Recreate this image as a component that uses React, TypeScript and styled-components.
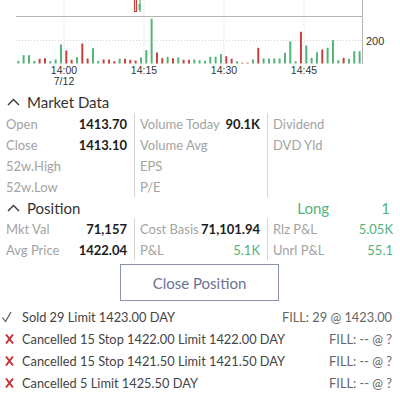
import React from 'react';
import styled, { createGlobalStyle } from 'styled-components';

const GlobalStyle = createGlobalStyle`
  html, body {
    margin: 0;
    padding: 0;
    background: #fff;
  }
  body {
    font-family: 'Lato', 'Noto Sans', sans-serif;
  }
`;

const GREEN = '#55b27a';
const RED = '#c8413f';

// volume per minute bar: [height, up?]
const volumes: [number, boolean][] = [
  [2.7, true], [8.3, true], [8.3, true], [2.7, true], [4.7, false], [5.3, false], [2.3, true], [4, true],
  [19, true], [13, false], [3.7, false], [6.3, true], [20, false], [5, false], [15.3, true], [2.7, true],
  [4, false], [4, false], [2.3, false], [4.7, true], [4.7, false], [3.7, false], [3, false], [6, true],
  [13.3, true], [44.7, true], [11, false], [5.3, false], [6.7, true], [5.3, false], [6, true], [3.7, false],
  [3.7, false], [4, true], [3.3, true], [2.7, true], [6.7, true], [6.7, true], [9.3, true], [7.3, false],
  [4.7, false], [2.3, true], [0.8, false], [0.8, false], [4, true], [15.7, false], [5, true], [5, true],
  [5, true], [5, true], [10.7, true], [22, true], [2.3, true], [31.7, false], [18, true], [5.7, true],
  [11.3, true], [14, false], [15.7, true], [23.3, true], [3.3, true], [5.7, false], [4.7, true], [12.3, true],
  [12.3, true],
];

const timeTicks = [
  { x: 64, label: '14:00', sub: '7/12' },
  { x: 144, label: '14:15' },
  { x: 224, label: '14:30' },
  { x: 304, label: '14:45' },
];

const VolumeChart: React.FC = () => {
  const base = 63.5;
  return (
    <ChartSvg width={400} height={90} viewBox="0 0 400 90">
      {timeTicks.map((t) => (
        <line key={t.x} x1={t.x} y1={0} x2={t.x} y2={64} stroke="#d2d2d2" strokeWidth={1} strokeDasharray="1 2" />
      ))}
      <line x1={16} y1={40.5} x2={362} y2={40.5} stroke="#d2d2d2" strokeWidth={1} strokeDasharray="1 2" />
      <line x1={16} y1={16.5} x2={362} y2={16.5} stroke="#b4b4b4" strokeWidth={1} />
      <line x1={362.5} y1={0} x2={362.5} y2={64} stroke="#b4b4b4" strokeWidth={1} />

      <path d="M136.5 0 V11.5 H134.5 V0" fill="none" stroke={RED} strokeWidth={1.2} />
      <line x1={140} y1={0} x2={140} y2={12} stroke={GREEN} strokeWidth={1.2} />
      <line x1={139.5} y1={4} x2={139.5} y2={10} stroke={GREEN} strokeWidth={2} />

      {volumes.map(([h, up], i) => (
        <rect key={i} x={17.3 + i * 5.333} y={base - h} width={2} height={h} fill={up ? GREEN : RED} />
      ))}

      <text x={366} y={44.5} fontSize={11} fill="#333" fontFamily="'Liberation Sans', Arial, sans-serif">200</text>
      {timeTicks.map((t) => (
        <g key={`l${t.x}`} fontSize={10.5} fill="#333" fontFamily="'Liberation Sans', Arial, sans-serif" textAnchor="middle">
          <text x={t.x} y={74}>{t.label}</text>
          {t.sub && <text x={t.x} y={84.5}>{t.sub}</text>}
        </g>
      ))}
    </ChartSvg>
  );
};

const Chevron: React.FC = () => (
  <svg width={13} height={8} viewBox="0 0 13 8">
    <polyline points="1,7 6.5,1.5 12,7" fill="none" stroke="#333" strokeWidth={1.4} />
  </svg>
);

const CheckIcon: React.FC = () => (
  <svg width={14} height={12} viewBox="0 0 14 12">
    <polyline points="1.5,6.5 4.5,10.5 10,1" fill="none" stroke="#555" strokeWidth={1.2} />
  </svg>
);

const CrossIcon: React.FC = () => (
  <svg width={14} height={12} viewBox="0 0 14 12">
    <path d="M5 1.5 L12 10.5 M12 1.5 L5 10.5" fill="none" stroke="#c23234" strokeWidth={2} />
  </svg>
);

type Cell = { label: string; value?: string; green?: boolean };

const marketData: Cell[][] = [
  [{ label: 'Open', value: '1413.70' }, { label: 'Close', value: '1413.10' }, { label: '52w.High' }, { label: '52w.Low' }],
  [{ label: 'Volume Today', value: '90.1K' }, { label: 'Volume Avg' }, { label: 'EPS' }, { label: 'P/E' }],
  [{ label: 'Dividend' }, { label: 'DVD Yld' }],
];

const positionData: Cell[][] = [
  [{ label: 'Mkt Val', value: '71,157' }, { label: 'Avg Price', value: '1422.04' }],
  [{ label: 'Cost Basis', value: '71,101.94' }, { label: 'P&L', value: '5.1K', green: true }],
  [{ label: 'Rlz P&L', value: '5.05K', green: true }, { label: 'Unrl P&L', value: '55.1', green: true }],
];

const orders = [
  { done: true, text: 'Sold 29 Limit 1423.00 DAY', fill: 'FILL: 29 @ 1423.00' },
  { done: false, text: 'Cancelled 15 Stop 1422.00 Limit 1422.00 DAY', fill: 'FILL: -- @ ?' },
  { done: false, text: 'Cancelled 15 Stop 1421.50 Limit 1421.50 DAY', fill: 'FILL: -- @ ?' },
  { done: false, text: 'Cancelled 5 Limit 1425.50 DAY', fill: 'FILL: -- @ ?' },
];

const DataGrid: React.FC<{ columns: Cell[][]; rows: number }> = ({ columns, rows }) => (
  <Grid rows={rows}>
    {columns.map((col, ci) => (
      <Column key={ci} first={ci === 0}>
        {col.map((c) => (
          <DataRow key={c.label}>
            <Label>{c.label}</Label>
            {c.value && <Value green={c.green}>{c.value}</Value>}
          </DataRow>
        ))}
      </Column>
    ))}
  </Grid>
);

const App: React.FC = () => (
  <Page>
    <GlobalStyle />
    <VolumeChart />

    <SectionHeader tall>
      <Chevron />
      <HeaderTitle>Market Data</HeaderTitle>
    </SectionHeader>
    <DataGrid columns={marketData} rows={4} />

    <SectionHeader>
      <Chevron />
      <HeaderTitle>Position</HeaderTitle>
      <Side>Long</Side>
      <Qty>1</Qty>
    </SectionHeader>
    <DataGrid columns={positionData} rows={2} />

    <ButtonRow>
      <CloseButton>Close Position</CloseButton>
    </ButtonRow>

    <OrderList>
      {orders.map((o, i) => (
        <OrderRow key={i}>
          <IconSlot>{o.done ? <CheckIcon /> : <CrossIcon />}</IconSlot>
          <OrderText>{o.text}</OrderText>
          <FillText>{o.fill}</FillText>
        </OrderRow>
      ))}
    </OrderList>
  </Page>
);

export default App;

const Page = styled.div`
  width: 400px;
  height: 400px;
  overflow: hidden;
  background: #fff;
`;

const ChartSvg = styled.svg`
  display: block;
`;

const SectionHeader = styled.div<{ tall?: boolean }>`
  display: flex;
  align-items: center;
  height: ${(p) => (p.tall ? 23 : 21)}px;
  padding: 0 10px 0 7px;
  color: #333;
`;

const HeaderTitle = styled.span`
  margin-left: 7px;
  font-size: 15px;
  flex: 1;
`;

const Side = styled.span`
  font-size: 15px;
  color: ${GREEN};
  width: 84px;
`;

const Qty = styled.span`
  font-size: 15px;
  color: ${GREEN};
`;

const Grid = styled.div<{ rows: number }>`
  display: grid;
  grid-template-columns: 134px 133px 133px;
  height: ${(p) => p.rows * 21}px;
`;

const Column = styled.div<{ first: boolean }>`
  display: flex;
  flex-direction: column;
  padding: 0 7px 0 ${(p) => (p.first ? 6 : 5)}px;
  border-left: ${(p) => (p.first ? 'none' : '1px solid #d6d6d6')};
`;

const DataRow = styled.div`
  display: flex;
  justify-content: space-between;
  align-items: center;
  height: 21px;
  font-size: 13px;
`;

const Label = styled.span`
  color: #a3a3a3;
`;

const Value = styled.span<{ green?: boolean }>`
  color: ${(p) => (p.green ? GREEN : '#1c1c1c')};
  font-weight: ${(p) => (p.green ? 400 : 700)};
`;

const ButtonRow = styled.div`
  display: flex;
  justify-content: center;
  padding: 4px 0 5px;
`;

const CloseButton = styled.button`
  width: 159px;
  height: 37px;
  margin-right: 1px;
  background: #fff;
  border: 1px solid #8a92ad;
  color: #6b7494;
  font-family: 'Lato', 'Noto Sans', sans-serif;
  font-size: 15px;
  padding: 0;
`;

const OrderList = styled.div`
  display: flex;
  flex-direction: column;
`;

const OrderRow = styled.div`
  display: flex;
  align-items: center;
  height: 22px;
  padding: 0 8px 0 1px;
  font-size: 12.8px;
`;

const IconSlot = styled.span`
  display: flex;
  width: 21px;
`;

const OrderText = styled.span`
  flex: 1;
  color: #444;
  white-space: nowrap;
`;

const FillText = styled.span`
  color: #666;
  white-space: nowrap;
`;
